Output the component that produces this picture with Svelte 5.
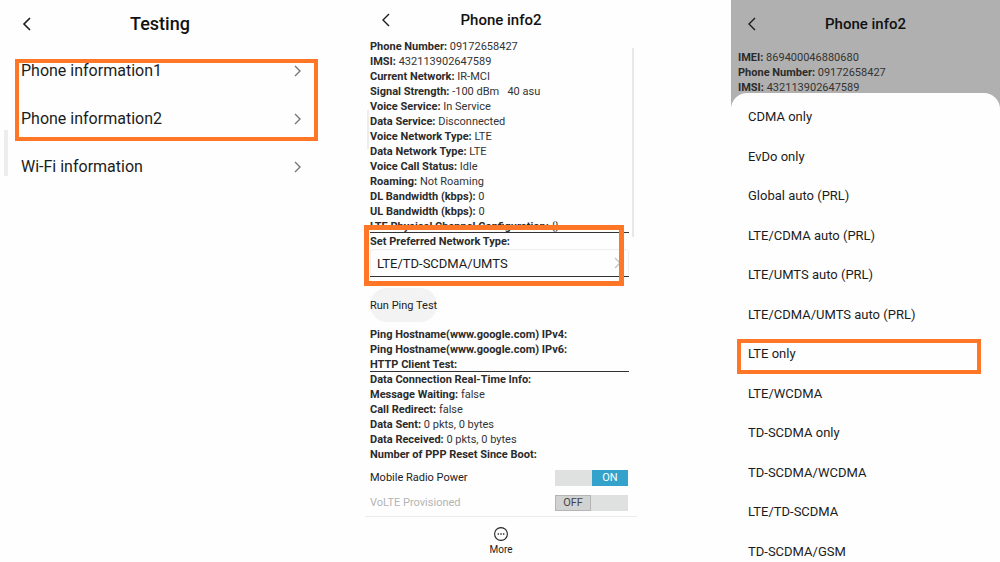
<script>
    const tests = ["Phone information1", "Phone information2"];

    const radioInfo = [
        ["Phone Number:", "09172658427"],
        ["IMSI:", "432113902647589"],
        ["Current Network:", "IR-MCI"],
        ["Signal Strength:", "-100 dBm   40 asu"],
        ["Voice Service:", "In Service"],
        ["Data Service:", "Disconnected"],
        ["Voice Network Type:", "LTE"],
        ["Data Network Type:", "LTE"],
        ["Voice Call Status:", "Idle"],
        ["Roaming:", "Not Roaming"],
        ["DL Bandwidth (kbps):", "0"],
        ["UL Bandwidth (kbps):", "0"],
        ["LTE Physical Channel Configuration:", "{}"],
    ];

    const pingInfo = [
        ["Ping Hostname(www.google.com) IPv4:", ""],
        ["Ping Hostname(www.google.com) IPv6:", ""],
        ["HTTP Client Test:", ""],
    ];

    const dataInfo = [
        ["Data Connection Real-Time Info:", ""],
        ["Message Waiting:", "false"],
        ["Call Redirect:", "false"],
        ["Data Sent:", "0 pkts, 0 bytes"],
        ["Data Received:", "0 pkts, 0 bytes"],
        ["Number of PPP Reset Since Boot:", ""],
    ];

    const simInfo = [
        ["IMEI:", "869400046880680"],
        ["Phone Number:", "09172658427"],
        ["IMSI:", "432113902647589"],
    ];

    const networkTypes = [
        "CDMA only",
        "EvDo only",
        "Global auto (PRL)",
        "LTE/CDMA auto (PRL)",
        "LTE/UMTS auto (PRL)",
        "LTE/CDMA/UMTS auto (PRL)",
        "LTE only",
        "LTE/WCDMA",
        "TD-SCDMA only",
        "TD-SCDMA/WCDMA",
        "LTE/TD-SCDMA",
        "TD-SCDMA/GSM",
    ];

    let preferred = $state("LTE/TD-SCDMA/UMTS");
    let picked = $state("LTE only");
    let radioPower = $state(true);
</script>

{#snippet header(title)}
    <header>
        <button class="back" aria-label="Back">
            <svg viewBox="0 0 10 14" fill="none" stroke="currentColor">
                <path d="M8 1 L2 7 L8 13" />
            </svg>
        </button>
        <h1>{title}</h1>
    </header>
{/snippet}

{#snippet info(rows)}
    <dl>
        {#each rows as [name, value]}
            <div class="info-line"><dt>{name}</dt> <dd>{value}</dd></div>
        {/each}
    </dl>
{/snippet}

{#snippet testRow(name)}
    <li>
        <button class="test-row">
            <span>{name}</span>
            <svg class="chevron" viewBox="0 0 8 12" fill="none" stroke="#777">
                <path d="M1 1 L6 6 L1 11" />
            </svg>
        </button>
    </li>
{/snippet}

<main>
    <section class="phone testing">
        {@render header("Testing")}
        <ul class="marked">
            {#each tests as name}
                {@render testRow(name)}
            {/each}
        </ul>
        <ul>
            {@render testRow("Wi-Fi information")}
        </ul>
        <div class="edge-handle"></div>
    </section>

    <section class="phone radio">
        {@render header("Phone info2")}
        <div class="content">
            {@render info(radioInfo)}
            <div class="preferred">
                <label for="network">Set Preferred Network Type:</label>
                <div class="select-wrap">
                    <select id="network" bind:value={preferred}>
                        <option>LTE/TD-SCDMA/UMTS</option>
                        {#each networkTypes as type}
                            <option>{type}</option>
                        {/each}
                    </select>
                    <svg class="chevron" viewBox="0 0 8 12" fill="none" stroke="#c4c4c4">
                        <path d="M1 1 L6 6 L1 11" />
                    </svg>
                </div>
            </div>
            <button class="ping">Run Ping Test</button>
            {@render info(pingInfo)}
            <div class="divided">
                {@render info(dataInfo)}
            </div>
            <div class="switches">
                <label>
                    <span>Mobile Radio Power</span>
                    <span class="switch">
                        <input type="checkbox" bind:checked={radioPower} />
                        <span class="thumb">{radioPower ? "ON" : "OFF"}</span>
                    </span>
                </label>
                <label class="disabled">
                    <span>VoLTE Provisioned</span>
                    <span class="switch">
                        <input type="checkbox" disabled />
                        <span class="thumb">OFF</span>
                    </span>
                </label>
            </div>
            <div class="scrollbar"></div>
        </div>
        <footer>
            <button class="more">
                <svg viewBox="0 0 16 16">
                    <circle cx="8" cy="8" r="6.4" fill="none" stroke="#222" stroke-width="1.1" />
                    <circle cx="5.3" cy="8" r="0.8" />
                    <circle cx="8" cy="8" r="0.8" />
                    <circle cx="10.7" cy="8" r="0.8" />
                </svg>
                More
            </button>
        </footer>
        <div class="edge-handle"></div>
    </section>

    <section class="phone picker">
        {@render header("Phone info2")}
        <div class="content">
            {@render info(simInfo)}
        </div>
        <ul class="sheet">
            {#each networkTypes as type}
                <li class:picked={type === picked}>
                    <button onclick={() => (picked = type)}>{type}</button>
                </li>
            {/each}
        </ul>
    </section>
</main>

<style>
    :global(body) {
        background: #fefefe;
    }

    main {
        display: grid;
        grid-template-columns: 320fr 317fr 363fr;
        min-height: 100vh;
        font-family: Roboto, "Liberation Sans", sans-serif;
        color: #1c1c1c;
    }

    .phone {
        position: relative;
        display: flex;
        flex-direction: column;
        min-width: 0;
    }

    .radio {
        margin-left: 45px;
    }

    .picker {
        margin-left: 94px;
        background: #b0b0b0;
    }

    button,
    select {
        font: inherit;
        color: inherit;
        background: none;
        border: 0;
        padding: 0;
        cursor: pointer;
    }

    ul,
    dl,
    dd,
    h1 {
        margin: 0;
        padding: 0;
        list-style: none;
    }

    header {
        display: grid;
        grid-template-columns: 42px 1fr 42px;
        align-items: center;
        height: 39px;
    }

    .testing header,
    .picker header {
        height: 47px;
    }

    h1 {
        font-size: 15px;
        font-weight: 500;
        line-height: 20px;
        text-align: center;
        color: #111;
    }

    .testing h1 {
        font-size: 18px;
    }

    .back {
        display: flex;
        justify-content: center;
    }

    .back svg {
        width: 10px;
        height: 14px;
        stroke-width: 1.4;
    }

    .testing .back {
        padding-left: 12px;
    }

    .testing .back svg {
        stroke-width: 1.6;
    }

    .chevron {
        width: 8px;
        height: 12px;
        stroke-width: 1.4;
    }

    .test-row {
        display: flex;
        align-items: center;
        justify-content: space-between;
        width: 100%;
        height: 48px;
        padding: 0 18px 0 21px;
        font-size: 16px;
        line-height: 20px;
    }

    .marked,
    .preferred,
    .picked {
        position: relative;
    }

    /* orange callouts drawn over the rows */
    .marked::after,
    .preferred::after,
    .picked::after {
        content: "";
        position: absolute;
        border: 4px solid #ff7626;
        pointer-events: none;
    }

    .marked::after {
        inset: 12px 2px 2px 15px;
    }

    .edge-handle {
        position: absolute;
        top: 130px;
        left: 4px;
        width: 4px;
        height: 46px;
        background: #ededed;
    }

    .radio .edge-handle {
        top: 110px;
        left: 2px;
        width: 2px;
        height: 39px;
    }

    .content {
        position: relative;
        padding: 0 8px 0 5px;
        font-size: 11px;
        line-height: 15px;
    }

    .picker .content {
        padding: 3px 8px 0 7px;
    }

    .info-line {
        white-space: pre;
        color: #333;
    }

    dt,
    dd {
        display: inline;
    }

    dt,
    .preferred label {
        font-weight: 700;
        color: #2b2b2b;
    }

    .preferred,
    .divided {
        border-top: 1px solid #333;
    }

    .preferred {
        margin-top: -2px;
        border-bottom: 1px solid #333;
    }

    .preferred::after {
        inset: -8px 5px -10px -6px;
        border-width: 5px;
    }

    .preferred label {
        display: block;
        padding-top: 1px;
    }

    .select-wrap {
        display: flex;
        align-items: center;
        border: 1px solid #eee;
        border-bottom: 0;
        border-radius: 4px;
    }

    select {
        flex: 1;
        min-width: 0;
        appearance: none;
        height: 26px;
        padding-left: 6px;
        font-size: 13px;
    }

    .select-wrap .chevron {
        margin-right: 6px;
    }

    .ping {
        display: block;
        height: 34px;
        margin: 11px 0 5px;
        border-radius: 17px;
        background: #f4f3f3;
    }

    .divided {
        margin-top: -1px;
    }

    .switches {
        padding: 3px 1px 1px 0;
    }

    .switches label {
        display: flex;
        align-items: center;
        justify-content: space-between;
        height: 25px;
    }

    .disabled {
        color: #b4b4b4;
    }

    .switch {
        position: relative;
        display: flex;
        width: 73px;
        height: 16px;
        background: #dfe1e1;
    }

    .switch input {
        position: absolute;
        inset: 0;
        margin: 0;
        width: 100%;
        height: 100%;
        opacity: 0;
    }

    .thumb {
        box-sizing: border-box;
        width: 36px;
        border: 1px solid #b5b5b5;
        background: #d1d2d2;
        color: #444;
        line-height: 14px;
        text-align: center;
    }

    input:checked + .thumb {
        margin-left: auto;
        border-color: #33a3cb;
        background: #33a3cb;
        color: #fff;
    }

    .scrollbar {
        position: absolute;
        top: 9px;
        right: 3px;
        width: 2px;
        height: 189px;
        background: #e8e8e8;
    }

    footer {
        display: flex;
        justify-content: center;
        border-top: 1px solid #ececec;
        padding-top: 9px;
    }

    .more {
        display: flex;
        flex-direction: column;
        align-items: center;
        font-size: 10px;
        line-height: 16px;
    }

    .more svg {
        width: 16px;
        height: 16px;
    }

    .sheet {
        flex: 1;
        display: flex;
        flex-direction: column;
        justify-content: space-between;
        position: relative;
        margin-top: -2px;
        padding: 14px 19px 0 17px;
        border-radius: 16px 16px 0 0;
        background: #fefefe;
        font-size: 13px;
        line-height: 20px;
    }

    .sheet button {
        display: block;
        width: 100%;
        text-align: left;
    }

    .picked::after {
        inset: -5px 0 -10px -11px;
    }
</style>
